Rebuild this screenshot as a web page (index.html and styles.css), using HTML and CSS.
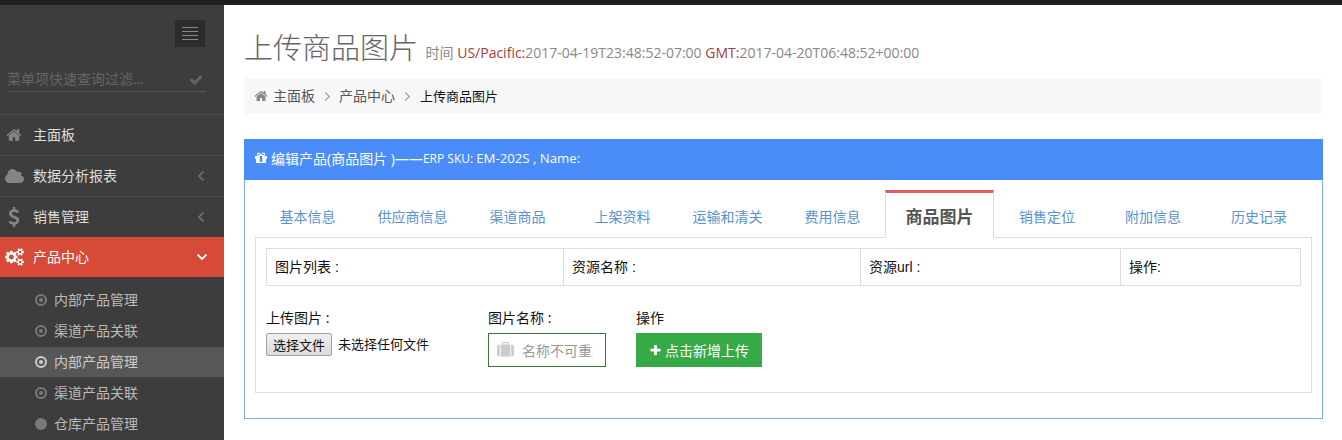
FILE: index.html
```html
<!DOCTYPE html>
<html lang="zh-CN">
<head>
<meta charset="utf-8">
<title>上传商品图片</title>
<link rel="stylesheet" href="styles.css">
</head>
<body>
<div class="topbar"></div>
<div class="layout">
  <aside class="sidebar">
    <div class="toggle-wrap"><div class="toggle"><i></i><i></i><i></i><i></i></div></div>
    <div class="search">
      <span class="search-text">菜单项快速查询过滤...</span>
      <svg class="search-icon" viewBox="0 0 1792 1792"><path d="M1671 566q0 40-28 68l-724 724-136 136q-28 28-68 28t-68-28l-136-136-362-362q-28-28-28-68t28-68l136-136q28-28 68-28t68 28l294 295 656-657q28-28 68-28t68 28l136 136q28 28 28 68z"/></svg>
    </div>
    <nav class="menu">
      <a class="item">
        <svg class="item-icon" viewBox="0 0 1792 1792"><path d="M1472 992v480q0 26-19 45t-45 19h-384v-384h-256v384h-384q-26 0-45-19t-19-45v-480q0-1 .5-3t.5-3l575-474 575 474q1 2 1 6zm223-69l-62 74q-8 9-21 11h-3q-13 0-21-7l-692-577-692 577q-12 8-24 7-13-2-21-11l-62-74q-8-10-7-23.5t11-21.5l719-599q32-26 76-26t76 26l244 204v-195q0-14 9-23t23-9h192q14 0 23 9t9 23v408l219 182q10 8 11 21.5t-7 23.5z"/></svg>
        <span class="item-label">主面板</span>
      </a>
      <a class="item">
        <svg class="item-icon icon-wide" viewBox="0 0 1920 1792"><path d="M1920 1216q0 159-112.5 271.5t-271.5 112.5h-1088q-185 0-316.5-131.5t-131.5-316.5q0-132 71-241.5t187-163.5q-2-28-2-43 0-212 150-362t362-150q158 0 286.5 88t187.5 230q70-62 166-62 106 0 181 75t75 181q0 75-41 138 129 30 213 134.5t84 239.5z"/></svg>
        <span class="item-label">数据分析报表</span>
        <svg class="chev" viewBox="0 0 8 12"><path d="M6.5 1.5 2 6l4.500 4.500"/></svg>
      </a>
      <a class="item">
        <svg class="item-icon" viewBox="0 0 1792 1792"><path d="M1362 1185q0 153-99.500 263.500t-258.500 136.500v175q0 14-9 23t-23 9h-135q-13 0-22.500-9.500t-9.500-22.500v-175q-66-9-127.500-31t-101.500-44.500-74-48-46.500-37.500-17.500-18q-17-21-2-41l103-135q7-10 23-12 15-2 24 9l2 2q113 99 243 125 37 8 74 8 81 0 142.500-43t61.500-122q0-28-15-53t-33.500-42-58.500-37.500-66-32-80-32.500q-39-16-61.500-25t-61.500-26.500-62.500-31-56.500-35.500-53.500-42.500-43.500-49-35.500-58-21-66.500-8.500-78q0-138 98-242t255-134v-180q0-13 9.500-22.500t22.500-9.500h135q14 0 23 9t9 23v176q57 6 110.500 23t87 33.500 63.500 37.500 39 29 15 14q17 18 5 38l-81 146q-8 15-23 16-14 3-27-7-3-3-14.500-12t-39-26.500-58.500-32-74.500-26-85.500-11.500q-95 0-155 43t-60 111q0 26 8.500 48t29.500 41.500 39.500 33 56 31 60.500 27 70 27.500q53 20 81 31.500t76 35 75.500 42.500 62 50 53 63.500 31.500 76.500 13 94z"/></svg>
        <span class="item-label">销售管理</span>
        <svg class="chev" viewBox="0 0 8 12"><path d="M6.500 1.500 2 6l4.500 4.500"/></svg>
      </a>
      <a class="item item-active">
        <svg class="item-icon icon-wide" viewBox="0 0 1920 1792"><path d="M896 896q0-106-75-181t-181-75-181 75-75 181 75 181 181 75 181-75 75-181zm768 512q0-52-38-90t-90-38-90 38-38 90q0 53 37.500 90.500t90.500 37.500 90.500-37.500 37.500-90.500zm0-1024q0-52-38-90t-90-38-90 38-38 90q0 53 37.500 90.500t90.500 37.500 90.500-37.500 37.500-90.500zm-384 421v185q0 10-7 19.500t-16 10.500l-155 24q-11 35-32 76 34 48 90 115 7 11 7 20 0 12-7 19-23 30-82.500 89.500t-78.500 59.500q-11 0-21-7l-115-90q-37 19-77 31-11 108-23 155-7 24-30 24h-186q-11 0-20-7.500t-10-17.500l-23-153q-34-10-75-31l-118 89q-7 7-20 7-11 0-21-8-144-133-144-160 0-9 7-19 10-14 41-53t47-61q-23-44-35-82l-152-24q-10-1-17-9.500t-7-19.500v-185q0-10 7-19.500t16-10.500l155-24q11-35 32-76-34-48-90-115-7-11-7-20 0-12 7-20 22-30 82-89t79-59q11 0 21 7l115 90q34-18 77-32 11-108 23-154 7-24 30-24h186q11 0 20 7.500t10 17.500l23 153q34 10 75 31l118-89q8-7 20-7 11 0 21 8 144 133 144 160 0 8-7 19-12 16-42 54t-45 60q23 48 34 82l152 23q10 2 17 10.500t7 19.500zm640 533v140q0 16-149 31-12 27-30 52 51 113 51 138 0 4-4 7-122 71-124 71-8 0-46-47t-52-68q-20 2-30 2t-30-2q-14 21-52 68t-46 47q-2 0-124-71-4-3-4-7 0-25 51-138-18-25-30-52-149-15-149-31v-140q0-16 149-31 13-29 30-52-51-113-51-138 0-4 4-7 4-2 35-20t59-34 30-16q8 0 46 46.500t52 67.500q20-2 30-2t30 2q51-71 92-112l6-2q4 0 124 70 4 3 4 7 0 25-51 138 17 23 30 52 149 15 149 31zm0-1024v140q0 16-149 31-12 27-30 52 51 113 51 138 0 4-4 7-122 71-124 71-8 0-46-47t-52-68q-20 2-30 2t-30-2q-14 21-52 68t-46 47q-2 0-124-71-4-3-4-7 0-25 51-138-18-25-30-52-149-15-149-31v-140q0-16 149-31 13-29 30-52-51-113-51-138 0-4 4-7 4-2 35-20t59-34 30-16q8 0 46 46.500t52 67.500q20-2 30-2t30 2q51-71 92-112l6-2q4 0 124 70 4 3 4 7 0 25-51 138 17 23 30 52 149 15 149 31z"/></svg>
        <span class="item-label">产品中心</span>
        <svg class="chev-down" viewBox="0 0 12 8"><path d="M1.500 1.500 6 6l4.500-4.500"/></svg>
      </a>
      <div class="submenu">
        <a class="sub"><span class="dot"></span><span class="sub-label">内部产品管理</span></a>
        <a class="sub"><span class="dot"></span><span class="sub-label">渠道产品关联</span></a>
        <a class="sub sub-active"><span class="dot"></span><span class="sub-label">内部产品管理</span></a>
        <a class="sub"><span class="dot"></span><span class="sub-label">渠道产品关联</span></a>
        <a class="sub"><span class="dot dot-solid"></span><span class="sub-label">仓库产品管理</span></a>
      </div>
    </nav>
  </aside>
  <main class="content">
    <h1 class="title">上传商品图片 <small class="subtitle">时间 <em>US/Pacific:</em>2017-04-19T23:48:52-07:00 <em>GMT:</em>2017-04-20T06:48:52+00:00</small></h1>
    <div class="breadcrumb">
      <svg class="crumb-home" viewBox="0 0 1792 1792"><path d="M1472 992v480q0 26-19 45t-45 19h-384v-384h-256v384h-384q-26 0-45-19t-19-45v-480q0-1 .5-3t.5-3l575-474 575 474q1 2 1 6zm223-69l-62 74q-8 9-21 11h-3q-13 0-21-7l-692-577-692 577q-12 8-24 7-13-2-21-11l-62-74q-8-10-7-23.500t11-21.500l719-599q32-26 76-26t76 26l244 204v-195q0-14 9-23t23-9h192q14 0 23 9t9 23v408l219 182q10 8 11 21.500t-7 23.500z"/></svg>
      <span class="crumb-text">主面板</span>
      <svg class="crumb-sep" viewBox="0 0 8 12"><path d="M2 1.500 6.500 6 2 10.500"/></svg>
      <span class="crumb-text">产品中心</span>
      <svg class="crumb-sep" viewBox="0 0 8 12"><path d="M2 1.500 6.500 6 2 10.500"/></svg>
      <span class="crumb-text crumb-current">上传商品图片</span>
    </div>
    <section class="panel">
      <header class="panel-head">
        <svg class="gift" viewBox="0 0 1792 1792"><path d="M1056 1356v-716h-320v716q0 25 18 38.500t46 13.500h192q28 0 46-13.500t18-38.500zm-456-844h195l-126-161q-26-31-69-31-40 0-68 28t-28 68 28 68 68 28zm688-96q0-40-28-68t-68-28q-43 0-69 31l-125 161h194q40 0 68-28t28-68zm376 256v320q0 14-9 23t-23 9h-96v416q0 40-28 68t-68 28h-1088q-40 0-68-28t-28-68v-416h-96q-14 0-23-9t-9-23v-320q0-14 9-23t23-9h440q-93 0-158.500-65.500t-65.500-158.500 65.500-158.500 158.500-65.500q107 0 168 77l128 165 128-165q61-77 168-77 93 0 158.500 65.500t65.500 158.500-65.500 158.500-158.500 65.500h440q14 0 23 9t9 23z"/></svg>
        <span class="head-main">编辑产品(商品图片 )——</span><span class="head-rest">ERP SKU: <b>EM-202S , Name:</b></span>
      </header>
      <div class="panel-body">
        <ul class="tabs">
          <li>基本信息</li>
          <li>供应商信息</li>
          <li>渠道商品</li>
          <li>上架资料</li>
          <li>运输和清关</li>
          <li>费用信息</li>
          <li class="tab-active">商品图片</li>
          <li>销售定位</li>
          <li>附加信息</li>
          <li>历史记录</li>
        </ul>
        <div class="tab-pane">
          <div class="grid-table">
            <div class="cell"><span>图片列表 :</span></div>
            <div class="cell"><span>资源名称 :</span></div>
            <div class="cell"><span>资源url :</span></div>
            <div class="cell"><span>操作:</span></div>
          </div>
          <form class="upload">
            <div class="field field-file">
              <label>上传图片 :</label>
              <div class="file-row"><button type="button" class="file-btn">选择文件</button><span class="file-note">未选择任何文件</span></div>
            </div>
            <div class="field field-name">
              <label>图片名称 :</label>
              <div class="name-input">
                <svg class="case" viewBox="0 0 1792 1792"><path d="M640 256h512v-128h-512v128zm-352 0v1280h-64q-92 0-158-66t-66-158v-832q0-92 66-158t158-66h64zm1120 0v1280h-1024v-1280h128v-160q0-40 28-68t68-28h576q40 0 68 28t28 68v160h128zm384 224v832q0 92-66 158t-158 66h-64v-1280h64q92 0 158 66t66 158z"/></svg>
                <input class="name-field" type="text" placeholder="名称不可重复">
              </div>
            </div>
            <div class="field">
              <label>操作</label>
              <button type="button" class="add-btn"><svg class="plus" viewBox="0 0 1792 1792"><path d="M1600 736v192q0 40-28 68t-68 28h-416v416q0 40-28 68t-68 28h-192q-40 0-68-28t-28-68v-416h-416q-40 0-68-28t-28-68v-192q0-40 28-68t68-28h416v-416q0-40 28-68t68-28h192q40 0 68 28t28 68v416h416q40 0 68 28t28 68z"/></svg>点击新增上传</button>
            </div>
          </form>
        </div>
      </div>
    </section>
  </main>
</div>
</body>
</html>
```
FILE: styles.css
```css
* { box-sizing: border-box; }
html, body { margin: 0; padding: 0; height: 440px; overflow: hidden; background: #fff; }
body { font-family: "Open Sans", "Noto Sans CJK SC", sans-serif; font-size: 14px; color: #333; }

.topbar { height: 5px; background: #1f1f1f; }
.layout { display: flex; height: 435px; }

.sidebar { width: 224px; flex: none; background: #3d3d3d; color: #ccc; overflow: hidden; }
.toggle-wrap { display: flex; justify-content: flex-end; padding: 15px 19px 0 0; }
.toggle { width: 30px; height: 27px; background: #2c2c2c; display: flex; flex-direction: column; align-items: center; gap: 3px; padding-top: 7px; }
.toggle i { display: block; width: 16px; height: 1px; background: #8a8a8a; }
.search { margin: 19px 18px 0 7px; height: 26px; border-bottom: 1px solid #555; display: flex; align-items: center; justify-content: space-between; padding-right: 3px; }
.search-text { font-size: 14px; line-height: 20px; color: #666; }
.search-icon { width: 14px; height: 14px; fill: #666; margin-top: 2px; }
.menu { margin-top: 22px; border-top: 1px solid #4d4d4d; }
.item { display: flex; align-items: center; height: 41px; border-bottom: 1px solid #4a4a4a; padding-left: 6px; color: #ddd; }
.item:nth-child(3) { height: 40px; border-bottom: 0; }
.item-icon { width: 16px; height: 16px; fill: #858585; flex: none; margin-right: 11px; }
.item:nth-child(3) .item-icon { width: 20px; height: 20px; margin-left: -2px; margin-right: 9px; }
.item .icon-wide { width: 19px; height: 18px; margin-left: -1px; margin-right: 9px; }
.item-label { font-size: 14px; flex: 1; color: #ddd; padding-bottom: 2px; }
.chev { width: 8px; height: 12px; margin-right: 19px; fill: none; stroke: #777; stroke-width: 1.5; }
.item-active { background: #d84a38; height: 40px; border-bottom: 0; }
.item-active .item-icon { fill: #fff; }
.item-active .item-label { color: #fff; }
.chev-down { width: 12px; height: 8px; margin-right: 16px; fill: none; stroke: #fff; stroke-width: 1.8; }
.submenu { display: flex; flex-direction: column; gap: 1px; padding-top: 8px; }
.sub { height: 30px; display: flex; align-items: center; padding-left: 35px; font-size: 14px; color: #bbb; }
.sub-label { padding-bottom: 2px; }
.sub-active { background: #575757; color: #ccc; }
.dot { width: 12px; height: 12px; border-radius: 50%; border: 2px solid #7a7a7a; margin-right: 7px; position: relative; flex: none; }
.dot::after { content: ""; position: absolute; left: 2px; top: 2px; width: 4px; height: 4px; border-radius: 50%; background: #7a7a7a; }
.sub-active .dot { border-color: #ccc; }
.sub-active .dot::after { background: #ccc; }
.dot-solid { background: #7a7a7a; }

.content { flex: 1; min-width: 0; padding: 0 19px 0 20px; }
.title { margin: 0; padding-top: 25px; height: 73px; font-size: 29px; line-height: 36px; font-weight: 300; color: #666; white-space: nowrap; }
.subtitle { font-size: 14px; font-weight: 400; color: #888; vertical-align: 1px; }
.subtitle em { font-style: normal; color: #a0403e; }
.breadcrumb { height: 36px; background: #f7f7f7; display: flex; align-items: center; padding-left: 10px; color: #555; font-size: 14px; margin-right: 1px; }
.crumb-text { padding-bottom: 2px; }
.crumb-home { width: 14px; height: 14px; fill: #888; margin-right: 5px; }
.crumb-sep { width: 8px; height: 11px; margin: 0 8px; fill: none; stroke: #999; stroke-width: 1.2; }
.crumb-current { color: #111; font-size: 13px; margin-left: 1px; }

.panel { margin-top: 25px; height: 280px; border: 1px solid #7eaaf0; }
.panel-head { height: 41px; margin: -1px -1px 0; background: #4b8df8; color: #fff; display: flex; align-items: center; padding: 0 0 3px 10px; font-size: 14px; }
.gift { width: 14px; height: 14px; fill: #fff; margin-right: 3px; }
.head-main { font-weight: 400; }
.head-rest { font-size: 12px; }
.head-rest b { font-weight: 400; font-size: 13.200px; }
.panel-body { padding: 10px 10px 0; }

.tabs { list-style: none; margin: 0; padding: 0; height: 48px; display: grid; grid-template-columns: repeat(6, 105px) 109px repeat(3, 106px); position: relative; z-index: 1; }
.tabs li { display: flex; align-items: center; justify-content: center; padding-top: 4px; font-size: 14px; color: #5a93cc; }
.tabs .tab-active { padding-top: 0; background: #fff; border: 1px solid #ddd; border-top: 3px solid #e85a62; border-bottom: 0; font-size: 17px; font-weight: 700; color: #555; height: 48px; }
.tab-pane { height: 156px; margin-top: -1px; border: 1px solid #ddd; padding: 10px; }
.grid-table { display: grid; grid-template-columns: 296px 297px 260px 1fr; height: 38px; border: 1px solid #ddd; font-family: "Liberation Sans", "Noto Sans CJK SC", sans-serif; font-size: 14px; color: #111; }
.cell { padding: 0 0 2px 8px; display: flex; align-items: center; border-left: 1px solid #ddd; }
.cell:first-child { border-left: 0; }
.upload { display: flex; margin-top: 22px; color: #111; font-size: 14px; }
.field { display: flex; flex-direction: column; }
.field label { height: 25px; line-height: 20px; }
.field-file { width: 222px; }
.field-name { width: 148px; }
.file-row { display: flex; align-items: center; }
.file-btn { width: 66px; height: 23px; padding: 0; font: inherit; font-size: 13px; color: #111; border: 1px solid #a0a0a0; border-radius: 2px; background: linear-gradient(#f0f0f0, #dcdcdc); }
.file-note { margin-left: 6px; font-size: 13px; padding-bottom: 2px; }
.name-input { width: 118px; height: 34px; border: 1px solid #3c763d; display: flex; align-items: center; padding: 0 12px 0 8px; }
.case { width: 17px; height: 17px; fill: #ccc; flex: none; margin-right: 8px; }
.name-field { width: 72px; min-width: 0; border: 0; padding: 0; outline: 0; font: inherit; font-size: 14px; }
.name-field::placeholder { color: #999; opacity: 1; }
.add-btn { width: 126px; height: 34px; background: #35aa47; color: #fff; border: 0; padding: 0; font: inherit; font-size: 14px; display: flex; align-items: center; justify-content: center; }
.plus { width: 13px; height: 13px; fill: #fff; margin-right: 3px; }
```
